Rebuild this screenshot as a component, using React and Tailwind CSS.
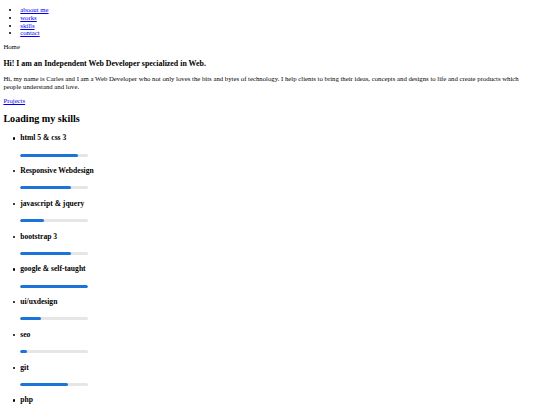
import React from "react";

const skills = [
  ["html 5 & css 3", 85],
  ["Responsive Webdesign", 75],
  ["javascript & jquery", 35],
  ["bootstrap 3", 75],
  ["google & self-taught", 100],
  ["ui/uxdesign", 30],
  ["seo", 10],
  ["git", 70],
  ["php", 60],
];

export default function App() {
  return (
    <div className="w-[540px] bg-white text-black px-[3.375px] font-['Liberation_Serif',serif] text-[6.75px] leading-[7.67px]">
      <ul className="list-disc pl-[16.875px] pt-[6.17px]">
        <li><a href="#" className="text-[#0000ee] underline">aboout me</a></li>
        <li><a href="#" className="text-[#0000ee] underline">works</a></li>
        <li><a href="#" className="text-[#0000ee] underline">skills</a></li>
        <li><a href="#" className="text-[#0000ee] underline">contact</a></li>
      </ul>
      <div className="mt-[6.33px]">Home</div>
      <h3 className="mt-[7.67px] text-[7.9px] leading-[9px] font-bold">
        Hi! I am an Independent Web Developer specialized in Web.
      </h3>
      <p className="mt-[7.67px]">
        Hi, my name is Carles and I am a Web Developer who not only loves the bits and bytes of technology. I help clients to bring their ideas, concepts and designs to life and create products which people understand and love.
      </p>
      <a href="#" className="block w-fit mt-[6.67px] text-[#0000ee] underline">Projects</a>
      <h2 className="mt-[8.42px] text-[10.125px] leading-[11.5px] font-bold">Loading my skills</h2>
      <ul className="pl-[16.875px] mt-[8.75px]">
        {skills.map(([name, v]) => (
          <li key={name} className="relative">
            <span className="absolute left-[-7.4px] top-[4px] w-[2.2px] h-[2.2px] rounded-full bg-black" />
            <h3 className="font-bold text-[7.6px] leading-[9px]">{name}</h3>
            <div className="h-[23.75px] pt-[11.2px]">
              <div className="w-[67.5px] h-[3px] rounded-full bg-[#e6e6e6] overflow-hidden">
                <div className="h-full rounded-full bg-[#1d74d8]" style={{ width: `${v}%` }} />
              </div>
            </div>
          </li>
        ))}
      </ul>
    </div>
  );
}
